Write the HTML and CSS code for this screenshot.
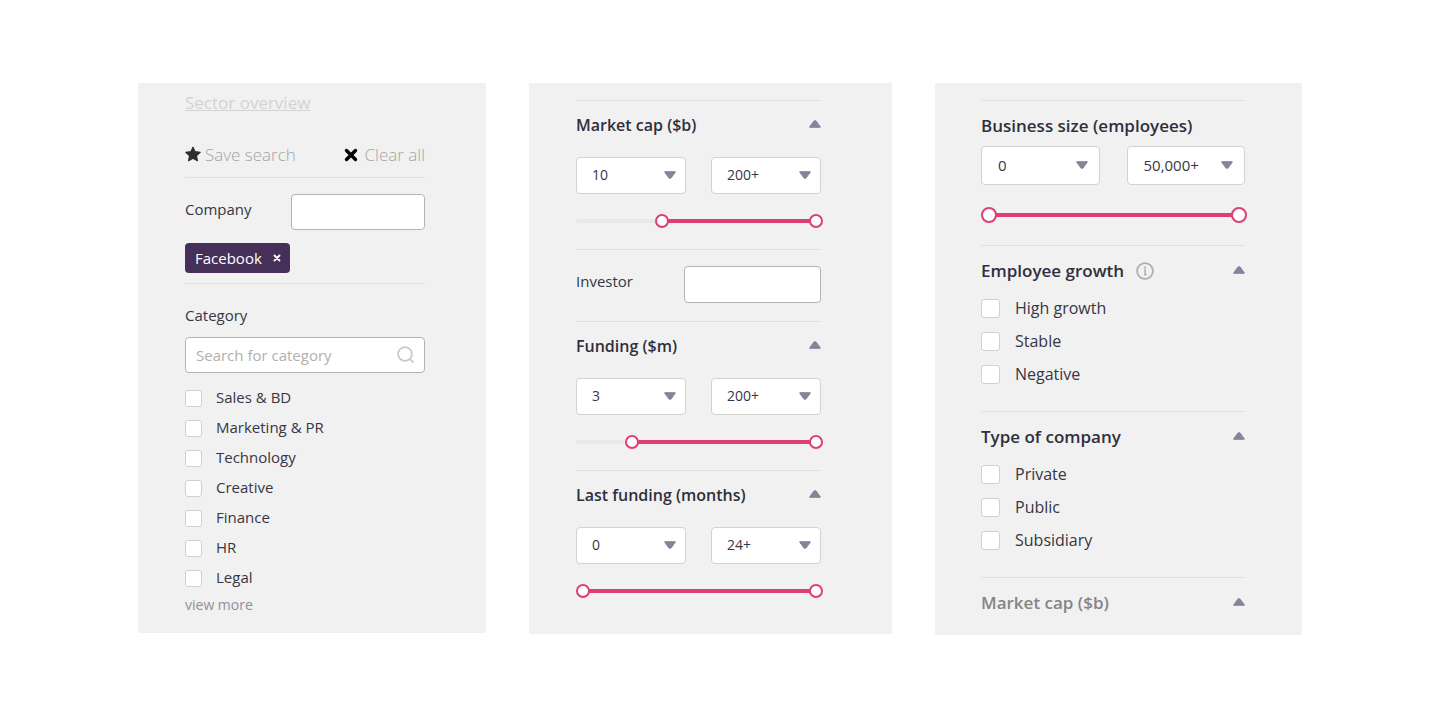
FILE: index.html
```html
<!DOCTYPE html>
<html lang="en">
<head>
   <meta charset="utf-8">
   <meta content="width=device-width, initial-scale=1.0" name="viewport">
   <title>Search filters</title>
   <link rel="stylesheet" href="styles.css">
</head>
<body>
   <!-- Shared icons -->
   <svg class="sprite" aria-hidden="true">
      <symbol id="caret-down" viewBox="0 0 12 8">
         <path d="M.8.6h10.4v.8L7 7.2H5L.8 1.4z" fill="currentColor" stroke="currentColor" stroke-width=".8" stroke-linejoin="round"/>
      </symbol>
      <symbol id="caret-up" viewBox="0 0 12 8">
         <path d="M.8 7.4h10.4v-.8L7 .8H5L.8 6.6z" fill="currentColor" stroke="currentColor" stroke-width=".8" stroke-linejoin="round"/>
      </symbol>
   </svg>

   <main class="panels">
      <!-- Company and category -->
      <section class="panel panel-search">
         <a href="#" class="overview">Sector overview</a>
         <div class="actions">
            <button type="button" class="action">
               <svg class="star" viewBox="0 0 16 16" aria-hidden="true">
                  <path d="M8 .2l2.1 4.5 5.1.6-3.8 3.4 1 5L8 11.3l-4.4 2.4 1-5L.8 5.3l5.1-.6z" fill="#2e2e2e" stroke="#2e2e2e" stroke-width="1.2" stroke-linejoin="round"/>
               </svg>
               Save search
            </button>
            <button type="button" class="action action-clear">
               <svg class="cross" viewBox="0 0 14 14" aria-hidden="true">
                  <path d="M2.5 2.5l9 9M11.5 2.5l-9 9" stroke="#000" stroke-width="3.4" stroke-linecap="round"/>
               </svg>
               Clear all
            </button>
         </div>
         <div class="group company">
            <div class="field">
               <label for="company">Company</label>
               <input type="text" id="company">
            </div>
            <button type="button" class="tag">
               Facebook
               <svg viewBox="0 0 8 8" aria-hidden="true">
                  <path d="M1.5 1.5l5 5M6.5 1.5l-5 5" stroke="#fff" stroke-width="1.8" stroke-linecap="round"/>
               </svg>
            </button>
         </div>
         <div class="group category">
            <label for="category">Category</label>
            <div class="search">
               <input type="text" id="category" placeholder="Search for category">
               <svg viewBox="0 0 18 18" aria-hidden="true">
                  <circle cx="8" cy="8" r="6.9" fill="none" stroke="#c9c8d2" stroke-width="1.7"/>
                  <path d="M12.9 13.1l3.7 3.5" stroke="#c9c8d2" stroke-width="1.9"/>
               </svg>
            </div>
            <div class="checks">
               <label><input type="checkbox"> Sales &amp; BD</label>
               <label><input type="checkbox"> Marketing &amp; PR</label>
               <label><input type="checkbox"> Technology</label>
               <label><input type="checkbox"> Creative</label>
               <label><input type="checkbox"> Finance</label>
               <label><input type="checkbox"> HR</label>
               <label><input type="checkbox"> Legal</label>
            </div>
            <a href="#" class="more">view more</a>
         </div>
      </section>

      <!-- Money filters -->
      <section class="panel panel-funding">
         <div class="group">
            <div class="heading">
               <h3>Market cap ($b)</h3>
               <button type="button" class="toggle" aria-label="Collapse market cap"><svg><use href="#caret-up"/></svg></button>
            </div>
            <div class="selects">
               <div class="select">
                  <select aria-label="Market cap from"><option>10</option></select>
                  <svg><use href="#caret-down"/></svg>
               </div>
               <div class="select">
                  <select aria-label="Market cap to"><option>200+</option></select>
                  <svg><use href="#caret-down"/></svg>
               </div>
            </div>
            <div class="slider" style="--from: 0.34">
               <input type="range" value="34" aria-label="Lowest market cap">
               <input type="range" value="100" aria-label="Highest market cap">
            </div>
         </div>
         <div class="group investor">
            <div class="field">
               <label for="investor">Investor</label>
               <input type="text" id="investor">
            </div>
         </div>
         <div class="group">
            <div class="heading">
               <h3>Funding ($m)</h3>
               <button type="button" class="toggle" aria-label="Collapse funding"><svg><use href="#caret-up"/></svg></button>
            </div>
            <div class="selects">
               <div class="select">
                  <select aria-label="Funding from"><option>3</option></select>
                  <svg><use href="#caret-down"/></svg>
               </div>
               <div class="select">
                  <select aria-label="Funding to"><option>200+</option></select>
                  <svg><use href="#caret-down"/></svg>
               </div>
            </div>
            <div class="slider" style="--from: 0.21">
               <input type="range" value="21" aria-label="Lowest funding">
               <input type="range" value="100" aria-label="Highest funding">
            </div>
         </div>
         <div class="group">
            <div class="heading">
               <h3>Last funding (months)</h3>
               <button type="button" class="toggle" aria-label="Collapse last funding"><svg><use href="#caret-up"/></svg></button>
            </div>
            <div class="selects">
               <div class="select">
                  <select aria-label="Last funding from"><option>0</option></select>
                  <svg><use href="#caret-down"/></svg>
               </div>
               <div class="select">
                  <select aria-label="Last funding to"><option>24+</option></select>
                  <svg><use href="#caret-down"/></svg>
               </div>
            </div>
            <div class="slider" style="--from: 0">
               <input type="range" value="0" aria-label="Fewest months">
               <input type="range" value="100" aria-label="Most months">
            </div>
         </div>
      </section>

      <!-- Business filters -->
      <section class="panel panel-business">
         <div class="group">
            <div class="heading">
               <h3>Business size (employees)</h3>
            </div>
            <div class="selects">
               <div class="select">
                  <select aria-label="Employees from"><option>0</option></select>
                  <svg><use href="#caret-down"/></svg>
               </div>
               <div class="select">
                  <select aria-label="Employees to"><option>50,000+</option></select>
                  <svg><use href="#caret-down"/></svg>
               </div>
            </div>
            <div class="slider" style="--from: 0">
               <input type="range" value="0" aria-label="Fewest employees">
               <input type="range" value="100" aria-label="Most employees">
            </div>
         </div>
         <div class="group">
            <div class="heading">
               <h3>Employee growth</h3>
               <svg class="info" viewBox="0 0 18 18" aria-hidden="true">
                  <circle cx="9" cy="9" r="7.9" fill="none" stroke="#b0b0b0" stroke-width="1.8"/>
                  <circle cx="9" cy="5.6" r="1.1" fill="#b0b0b0"/>
                  <path d="M8 8.2h1.2v4.4M8 12.7h2.4" fill="none" stroke="#b0b0b0" stroke-width="1.5"/>
               </svg>
               <button type="button" class="toggle" aria-label="Collapse employee growth"><svg><use href="#caret-up"/></svg></button>
            </div>
            <div class="checks">
               <label><input type="checkbox"> High growth</label>
               <label><input type="checkbox"> Stable</label>
               <label><input type="checkbox"> Negative</label>
            </div>
         </div>
         <div class="group">
            <div class="heading">
               <h3>Type of company</h3>
               <button type="button" class="toggle" aria-label="Collapse type of company"><svg><use href="#caret-up"/></svg></button>
            </div>
            <div class="checks">
               <label><input type="checkbox"> Private</label>
               <label><input type="checkbox"> Public</label>
               <label><input type="checkbox"> Subsidiary</label>
            </div>
         </div>
         <div class="group faded">
            <div class="heading">
               <h3>Market cap ($b)</h3>
               <button type="button" class="toggle" aria-label="Expand market cap"><svg><use href="#caret-up"/></svg></button>
            </div>
         </div>
      </section>
   </main>
</body>
</html>
```
FILE: styles.css
```css
* {
    margin: 0;
    padding: 0;
    box-sizing: border-box;
}
body {
    background: #fff;
    color: #363644;
    font-family: "Open Sans", sans-serif;
    font-size: 15px;
    line-height: 24px;
}
button, input, select {
    font: inherit;
    color: inherit;
}
button {
    border: 0;
    background: none;
    cursor: pointer;
}
.sprite {
    display: none;
}
.panels {
    display: grid;
    grid-template-columns: 348fr 363fr 367fr;
    gap: 43px;
    align-items: start;
    padding: 83px 138px;
}
.panel {
    --thumb: 14px;
    background: #f1f1f1;
}
.panel-search {
    padding: 8px 61px 16px 47px;
}
.panel-funding {
    padding: 17px 71px 15px 47px;
}
.panel-business {
    --thumb: 16px;
    padding: 17px 57px 20px 46px;
    font-size: 16px;
}
.group {
    border-top: 1px solid #e0e0e3;
}

/* Top links */
.overview {
    display: block;
    color: #d3d3d3;
    font-size: 17px;
}
.actions {
    display: flex;
    justify-content: space-between;
    margin-top: 28px;
    padding-bottom: 10px;
}
.action {
    display: flex;
    align-items: center;
    gap: 4px;
    color: #a5a5a5;
    font-size: 17px;
    font-weight: 300;
}
.action-clear {
    gap: 7px;
}
.star {
    width: 16px;
    height: 16px;
    overflow: visible;
}
.cross {
    width: 14px;
    height: 14px;
}

/* Text fields */
input[type="text"] {
    height: 36px;
    padding: 0 10px;
    border: 1px solid #b3b3b3;
    border-radius: 4px;
    background: #fff;
}
.field {
    display: flex;
    justify-content: space-between;
    line-height: 30px;
}
.field input {
    width: 56%;
}
.company {
    padding: 16px 0 10px;
}
.tag {
    display: flex;
    align-items: center;
    gap: 11px;
    height: 30px;
    margin-top: 13px;
    padding: 0 9px 1px 10px;
    border-radius: 4px;
    background: #46305a;
    color: #fff;
}
.tag svg {
    width: 8px;
    height: 8px;
}
.category {
    padding-top: 19px;
}
.search {
    position: relative;
    margin-top: 10px;
}
.search input {
    display: block;
    width: 100%;
}
.search input::placeholder {
    color: #b0b0b0;
}
.search svg {
    position: absolute;
    top: 9px;
    right: 10px;
    width: 18px;
    height: 18px;
}
.investor {
    padding: 16px 0 18px;
}
.investor input {
    height: 37px;
}

/* Tick boxes */
.checks {
    padding: 9px 0 1px;
}
.checks label {
    display: flex;
    align-items: center;
    gap: 14px;
    height: 30px;
}
.checks input {
    appearance: none;
    width: 17px;
    height: 17px;
    margin-top: 2px;
    border: 1px solid #cdd0d8;
    border-radius: 3px;
    background: #fff;
}
.checks input:checked {
    background: #46305a;
}
.panel-business .checks {
    padding: 8px 0 21px;
}
.panel-business .checks label {
    gap: 15px;
    height: 33px;
}
.panel-business .checks input {
    width: 19px;
    height: 19px;
}
.more {
    display: block;
    color: #8f9096;
    font-size: 14px;
    text-decoration: none;
}

/* Group headings */
.heading {
    display: flex;
    align-items: center;
    padding-top: 12px;
}
.heading h3 {
    color: #2f2f3d;
    font-size: 16px;
    font-weight: 600;
}
.panel-business .heading {
    padding-top: 13px;
}
.panel-business h3 {
    font-size: 17px;
}
.panel .faded h3 {
    color: #858585;
}
.info {
    width: 18px;
    height: 18px;
    margin-left: 12px;
}
.toggle {
    margin-left: auto;
    padding-bottom: 2px;
}
.toggle svg, .select svg {
    display: block;
    width: 12px;
    height: 8px;
    color: #85849a;
}

/* Drop-downs */
.selects {
    display: grid;
    grid-template-columns: 1fr 1fr;
    gap: 25px;
    padding-top: 20px;
}
.select {
    position: relative;
}
.select select {
    appearance: none;
    display: block;
    width: 100%;
    height: 37px;
    padding: 0 15px 1px;
    border: 1px solid #d2d2d2;
    border-radius: 4px;
    background: #fff;
    font-size: 14px;
}
.select svg {
    position: absolute;
    top: 14px;
    right: 10px;
    pointer-events: none;
}
.panel-business .selects {
    gap: 27px;
    padding-top: 8px;
}
.panel-business .select select {
    height: 39px;
    padding: 0 16px 1px;
    font-size: 15px;
}
.panel-business .select svg {
    top: 15px;
    right: 12px;
}

/* Two-handle slider */
.slider {
    position: relative;
    height: var(--thumb);
    margin: 20px -2px 21px 0;
}
.panel-business .slider {
    margin: 22px -2px 22px 0;
}
.slider::before, .slider::after {
    content: "";
    position: absolute;
    top: calc(50% - 2px);
    left: 0;
    right: calc(var(--thumb) / 2);
    height: 4px;
    border-radius: 2px;
    background: #e8e8e8;
}
.slider::after {
    left: calc(var(--thumb) / 2 + (100% - var(--thumb)) * var(--from));
    background: #df3e72;
}
.slider input {
    appearance: none;
    position: absolute;
    z-index: 1;
    top: 0;
    left: 0;
    width: 100%;
    height: 100%;
    background: none;
    pointer-events: none;
}
.slider input::-webkit-slider-thumb {
    appearance: none;
    width: var(--thumb);
    height: var(--thumb);
    border: 2px solid #df3e72;
    border-radius: 50%;
    background: #fff;
    cursor: pointer;
    pointer-events: auto;
}
```
